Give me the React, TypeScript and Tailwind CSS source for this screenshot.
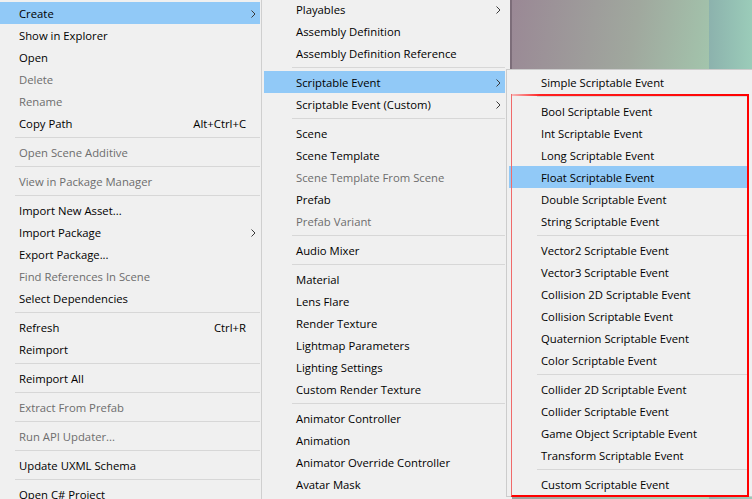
type Item =
  | { sep: true }
  | {
      sep?: false;
      label: string;
      disabled?: boolean;
      sub?: boolean;
      active?: boolean;
      shortcut?: string;
    };

const SEP: Item = { sep: true };

/* ================= MENU DATA ================= */

const assetMenu: Item[] = [
  { label: "Create", sub: true, active: true },
  { label: "Show in Explorer" },
  { label: "Open" },
  { label: "Delete", disabled: true },
  { label: "Rename", disabled: true },
  { label: "Copy Path", shortcut: "Alt+Ctrl+C" },
  SEP,
  { label: "Open Scene Additive", disabled: true },
  SEP,
  { label: "View in Package Manager", disabled: true },
  SEP,
  { label: "Import New Asset..." },
  { label: "Import Package", sub: true },
  { label: "Export Package..." },
  { label: "Find References In Scene", disabled: true },
  { label: "Select Dependencies" },
  SEP,
  { label: "Refresh", shortcut: "Ctrl+R" },
  { label: "Reimport" },
  SEP,
  { label: "Reimport All" },
  SEP,
  { label: "Extract From Prefab", disabled: true },
  SEP,
  { label: "Run API Updater...", disabled: true },
  SEP,
  { label: "Update UXML Schema" },
  SEP,
  { label: "Open C# Project" },
];

const createMenu: Item[] = [
  { label: "Playables", sub: true },
  { label: "Assembly Definition" },
  { label: "Assembly Definition Reference" },
  SEP,
  { label: "Scriptable Event", sub: true, active: true },
  { label: "Scriptable Event (Custom)", sub: true },
  SEP,
  { label: "Scene" },
  { label: "Scene Template" },
  { label: "Scene Template From Scene", disabled: true },
  { label: "Prefab" },
  { label: "Prefab Variant", disabled: true },
  SEP,
  { label: "Audio Mixer" },
  SEP,
  { label: "Material" },
  { label: "Lens Flare" },
  { label: "Render Texture" },
  { label: "Lightmap Parameters" },
  { label: "Lighting Settings" },
  { label: "Custom Render Texture" },
  SEP,
  { label: "Animator Controller" },
  { label: "Animation" },
  { label: "Animator Override Controller" },
  { label: "Avatar Mask" },
];

const eventMenu: Item[] = [
  { label: "Simple Scriptable Event" },
  SEP,
  { label: "Bool Scriptable Event" },
  { label: "Int Scriptable Event" },
  { label: "Long Scriptable Event" },
  { label: "Float Scriptable Event", active: true },
  { label: "Double Scriptable Event" },
  { label: "String Scriptable Event" },
  SEP,
  { label: "Vector2 Scriptable Event" },
  { label: "Vector3 Scriptable Event" },
  { label: "Collision 2D Scriptable Event" },
  { label: "Collision Scriptable Event" },
  { label: "Quaternion Scriptable Event" },
  { label: "Color Scriptable Event" },
  SEP,
  { label: "Collider 2D Scriptable Event" },
  { label: "Collider Scriptable Event" },
  { label: "Game Object Scriptable Event" },
  { label: "Transform Scriptable Event" },
  SEP,
  { label: "Custom Scriptable Event" },
];

/* ================= CHEVRON ================= */

const Chevron = () => (
  <svg width="5" height="8" viewBox="0 0 5 8" className="block">
    <polyline
      points="0.5,0.5 4,4 0.5,7.5"
      fill="none"
      stroke="#3a3a3a"
      strokeWidth="1"
    />
  </svg>
);

/* ================= MENU LIST ================= */

const MenuRows = ({ items, rowWidth }: { items: Item[]; rowWidth: string }) => (
  <>
    {items.map((item, i) =>
      item.sep ? (
        <div key={i} className={`${rowWidth} py-[3px] pl-[28px]`}>
          <div className="h-px bg-[#d7d7d7]" />
        </div>
      ) : (
        <div
          key={i}
          className={`${rowWidth} flex h-[22px] items-center pl-[32px] pt-[2px] leading-[20px] ${
            item.active ? "bg-[#91c9f7]" : ""
          } ${item.disabled ? "text-[#6d6d6d]" : "text-black"}`}
        >
          <span className="flex-1 whitespace-nowrap">{item.label}</span>
          {item.shortcut && (
            <span className="whitespace-nowrap">{item.shortcut}</span>
          )}
          <span className="flex w-[14px] justify-center">
            {item.sub && <Chevron />}
          </span>
        </div>
      )
    )}
  </>
);

/* ================= APP ================= */

const App = () => {
  return (
    <div
      className="relative flex h-[499px] w-[752px] items-start overflow-hidden bg-[#f0f0f0] text-[11.3px]"
      style={{ fontFamily: '"Open Sans", "Noto Sans", sans-serif' }}
    >
      {/* ASSET CONTEXT MENU */}
      <div className="-ml-[15px] shrink-0 border-r border-[#cfcfcf] bg-[#f0f0f0] pl-[2px] pr-px pt-[2px]">
        <MenuRows items={assetMenu} rowWidth="w-[273px]" />
      </div>

      {/* CREATE SUBMENU */}
      <div className="-mt-[4px] shrink-0 border-r-2 border-[#7c6d79] bg-[#f0f0f0] pl-[2px] pr-[5px] pt-[2px]">
        <MenuRows items={createMenu} rowWidth="w-[241px]" />
      </div>

      {/* SCENE VIEW BEHIND */}
      <div className="flex h-[499px] flex-1">
        <div className="h-full flex-1 bg-[linear-gradient(100deg,#9a8895_0%,#a0a89e_45%,#a4d5b4_90%,#a6d8b6_100%)]" />
        <div className="h-full w-[43px] bg-[linear-gradient(90deg,#8cb2ad,#9bccb9)]" />
      </div>

      {/* SCRIPTABLE EVENT SUBMENU */}
      <div className="absolute left-[506px] top-[69px] w-[252px] border border-[#cccccc] bg-[#f0f0f0] pl-[2px] pt-px pb-px">
        <MenuRows items={eventMenu} rowWidth="w-[238px]" />
      </div>

      {/* RED HIGHLIGHT BOX */}
      <div className="absolute left-[511px] top-[94px] h-[403px] w-[238px] border-b-2 border-l border-r-2 border-b-[#ff0000] border-l-[#f06a6a] border-r-[#ff0000]">
        <div className="h-[2px] bg-[linear-gradient(90deg,#f7b8b8,#ff2020_12%,#ff0000)]" />
      </div>
    </div>
  );
};

export default App;
